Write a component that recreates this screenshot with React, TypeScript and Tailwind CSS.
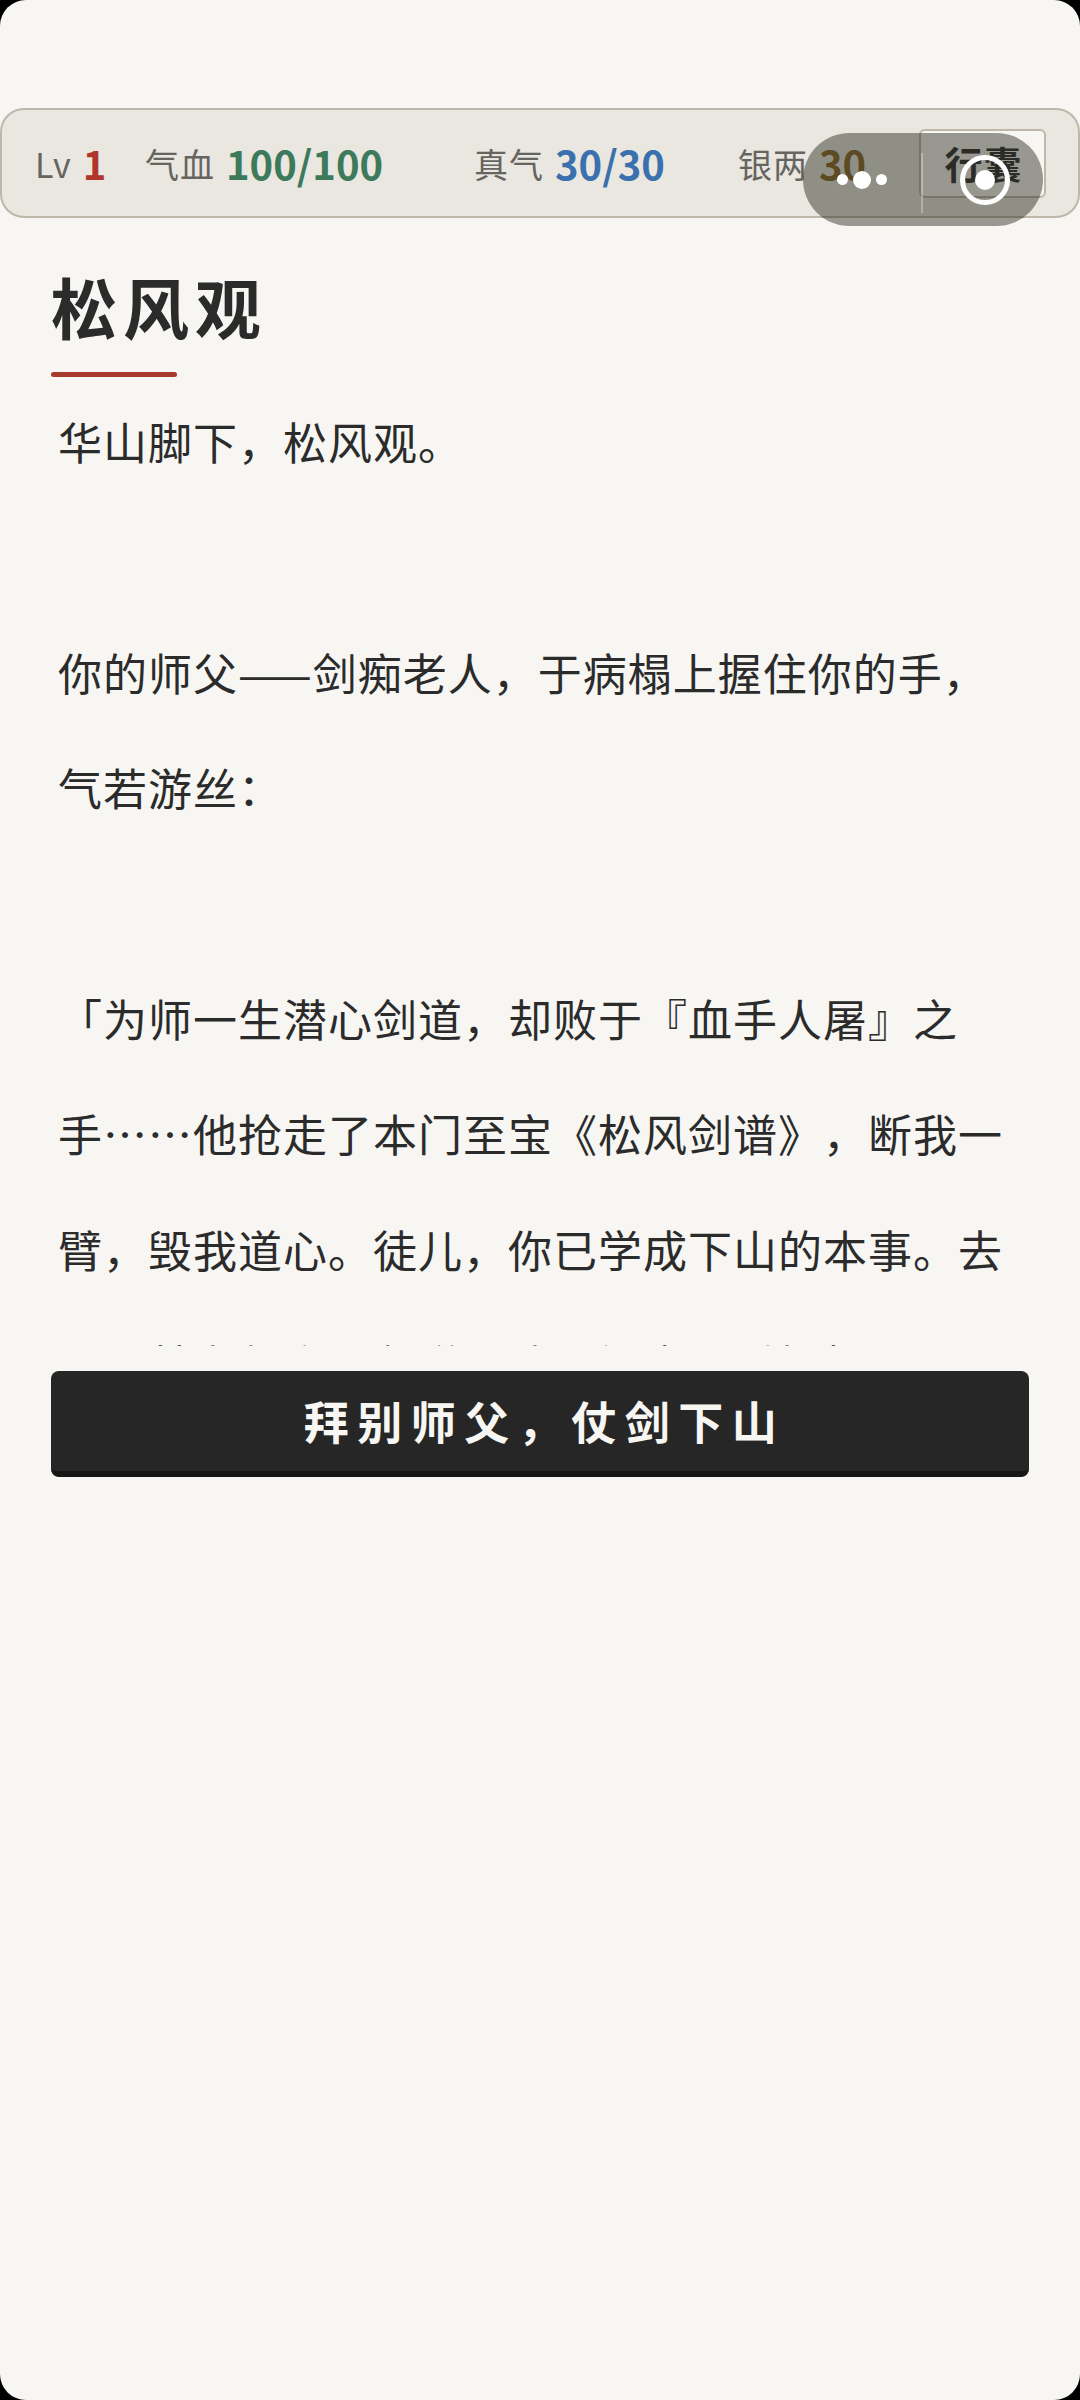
import React from 'react';

const story = `华山脚下，松风观。

你的师父——剑痴老人，于病榻上握住你的手，气若游丝：

「为师一生潜心剑道，却败于『血手人屠』之手……他抢走了本门至宝《松风剑谱》，断我一臂，毁我道心。徒儿，你已学成下山的本事。去吧，替为师夺回剑谱，清理门户，重振松风观。」`;

const Stat: React.FC<{ label: string; value: string; color: string; className: string }> = ({ label, value, color, className }) => (
  <div className={`flex items-center gap-[11px] ${className}`}>
    <span className="text-[34px] tracking-[1px] text-[#666460]">{label}</span>
    <span className={`text-[40px] font-bold ${color}`}>{value}</span>
  </div>
);

export default function App() {
  return (
    <div className="bg-black">
      <div className="relative h-[2400px] w-[1080px] overflow-hidden rounded-[26px] bg-[#f7f6f2] text-[#2b2b2b] [font-family:'Noto_Sans_CJK_SC','Noto_Sans',sans-serif] [text-spacing-trim:space-all]">
        <div className="h-[108px]" />

        <header className="flex h-[110px] items-center rounded-[24px] border-2 border-[#bdb8a9] bg-[#e9e7df] pl-[33px]">
          <Stat label="Lv" value="1" color="text-[#b0352c]" className="w-[110px]" />
          <Stat label="气血" value="100/100" color="text-[#3d7a5c]" className="w-[329px]" />
          <Stat label="真气" value="30/30" color="text-[#3a70ae]" className="w-[264px]" />
          <Stat label="银两" value="30" color="text-[#8a6a2a]" className="w-[181px]" />
          <button className="h-[69px] w-[127px] rounded-[6px] border-2 border-[#bdb8a9] bg-[#f7f6f2] pl-[2px] text-[38px] leading-none font-bold tracking-[1px] text-[#333]">
            行囊
          </button>
        </header>

        <main className="px-[51px]">
          <h1 className="mt-[42px] text-[66px] leading-[90px] font-bold tracking-[6px]">松风观</h1>
          <div className="mt-[22px] h-[5px] w-[126px] rounded-full bg-[#a83a30]" />

          <div className="mt-[7px] h-[962px] overflow-hidden pl-[7px]">
            <p className="w-[950px] whitespace-pre-wrap text-[44px] leading-[115.4px] tracking-[1px]">{story}</p>
          </div>

          <button className="mt-[25px] h-[106px] w-full rounded-[8px] border-b-[6px] border-[#161616] bg-[#262626] pl-[9px] text-[45px] font-bold tracking-[8.5px] text-[#f7f6f2]">
            拜别师父，仗剑下山
          </button>
        </main>

        {/* system capsule floating over the bar */}
        <div className="absolute top-[133px] left-[803px] flex h-[93px] w-[240px] items-center rounded-full bg-[rgba(35,35,25,0.45)]">
          <div className="flex w-[118px] items-center justify-center gap-[5px]">
            <span className="h-[11px] w-[11px] rounded-full bg-white" />
            <span className="h-[18px] w-[18px] rounded-full bg-white" />
            <span className="h-[11px] w-[11px] rounded-full bg-white" />
          </div>
          <div className="h-[60px] w-[2px] translate-y-[3px] bg-white/30" />
          <div className="flex flex-1 items-center justify-center pl-[3px]">
            <div className="flex h-[50px] w-[50px] items-center justify-center rounded-full border-[5px] border-white">
              <span className="h-[20px] w-[20px] rounded-full bg-white" />
            </div>
          </div>
        </div>
      </div>
    </div>
  );
}
